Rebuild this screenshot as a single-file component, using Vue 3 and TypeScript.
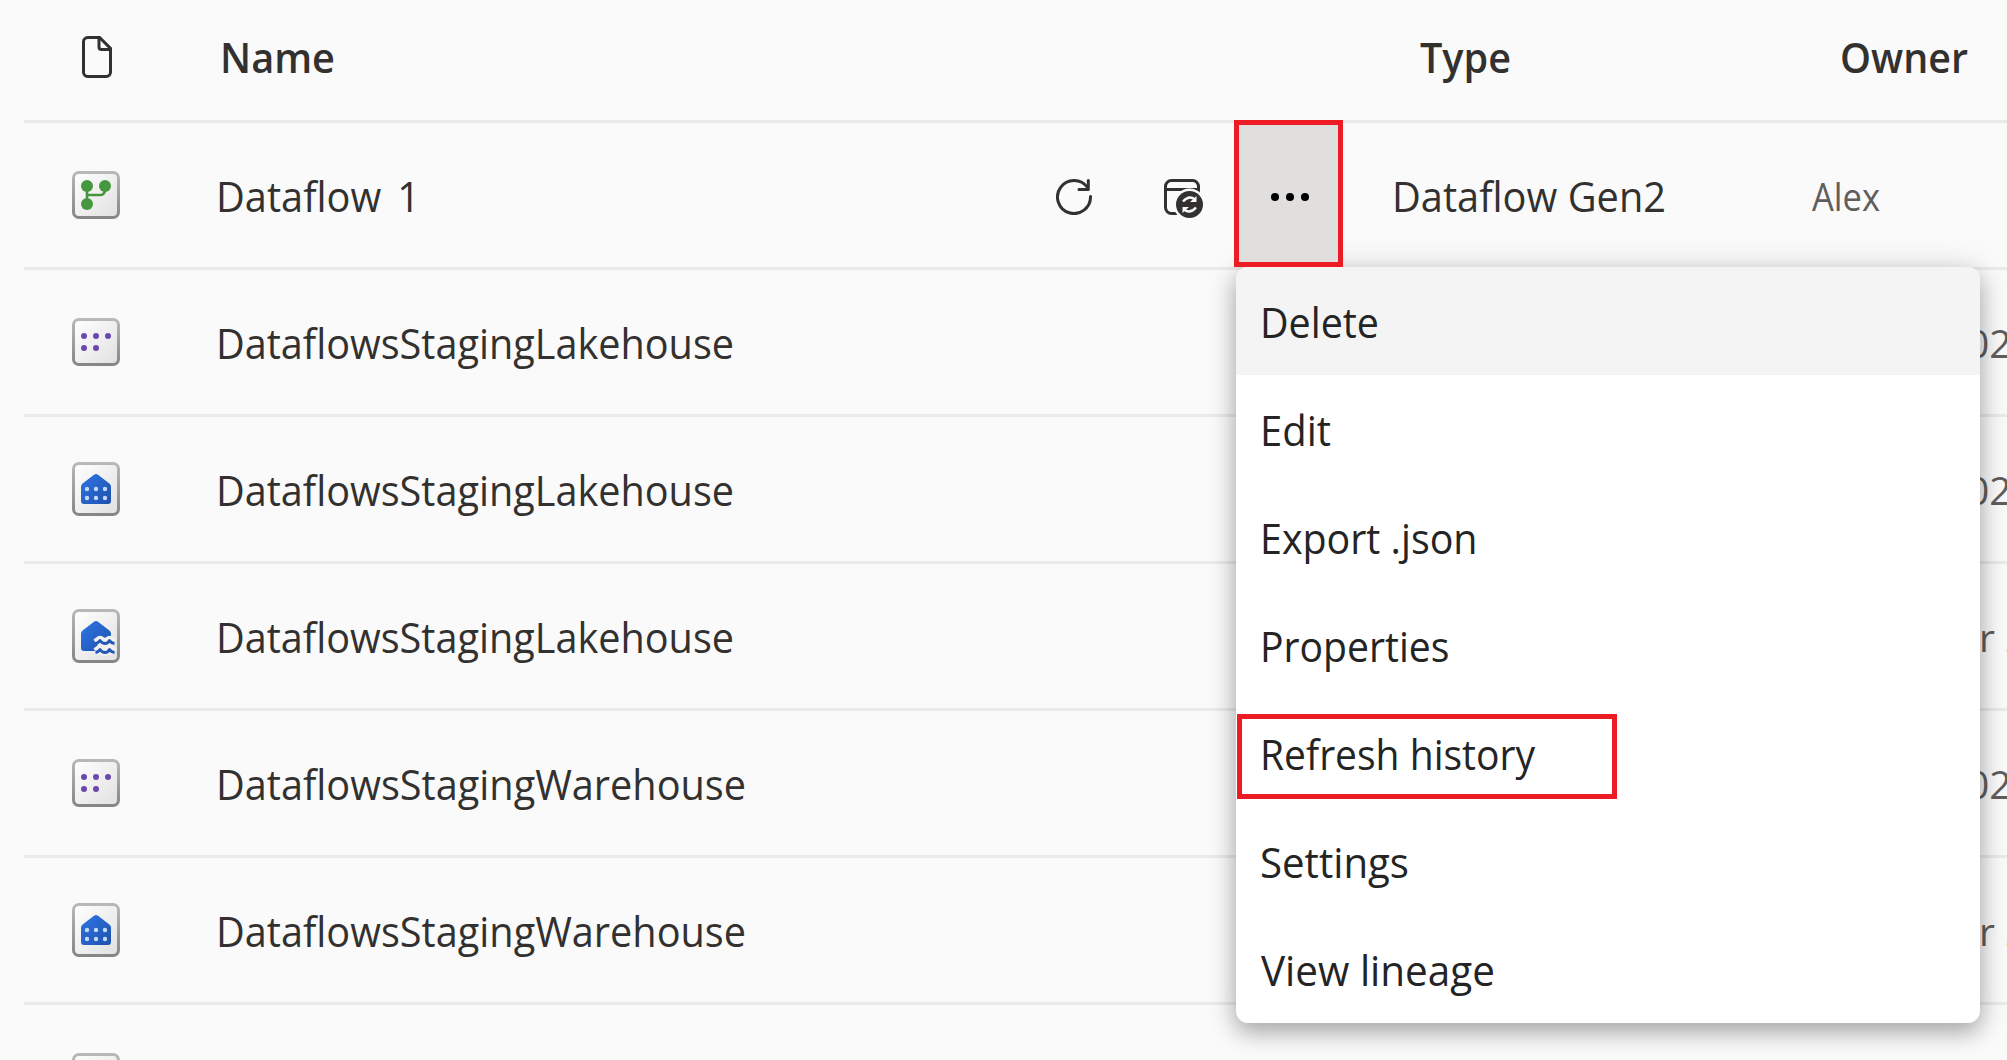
<script setup lang="ts">
type IconKind = 'dataflow' | 'dataset' | 'warehouse' | 'lakehouse'

interface Item {
  id: number
  icon: IconKind
  name: string
  nameWidth: number
  owner: string
  ownerOffset: number
  ownerWidth?: number
  type?: string
}

interface Action {
  label: string
  width: number
  offset?: number
  state?: 'hover' | 'marked'
}

const items: Item[] = [
  { id: 1, icon: 'dataflow', name: 'Dataflow\u00a0 1', nameWidth: 204, type: 'Dataflow Gen2', owner: 'Alex', ownerOffset: 0, ownerWidth: 68 },
  { id: 2, icon: 'dataset', name: 'DataflowsStagingLakehouse', nameWidth: 518, owner: '02', ownerOffset: 155 },
  { id: 3, icon: 'warehouse', name: 'DataflowsStagingLakehouse', nameWidth: 518, owner: '02', ownerOffset: 155 },
  { id: 4, icon: 'lakehouse', name: 'DataflowsStagingLakehouse', nameWidth: 518, owner: 'r 2', ownerOffset: 167 },
  { id: 5, icon: 'dataset', name: 'DataflowsStagingWarehouse', nameWidth: 530, owner: '02', ownerOffset: 155 },
  { id: 6, icon: 'warehouse', name: 'DataflowsStagingWarehouse', nameWidth: 530, owner: 'r 2', ownerOffset: 167 },
  { id: 7, icon: 'dataset', name: '', nameWidth: 0, owner: '', ownerOffset: 0 },
]

const actions: Action[] = [
  { label: 'Delete', width: 119, state: 'hover' },
  { label: 'Edit', width: 71 },
  { label: 'Export .json', width: 217.5 },
  { label: 'Properties', width: 189.5 },
  { label: 'Refresh history', width: 275, state: 'marked' },
  { label: 'Settings', width: 149, offset: 0 },
  { label: 'View lineage', width: 234, offset: 0.5 },
]

// Condenses or widens a label so that it takes exactly the given width.
const vFit = {
  mounted(el: HTMLElement, binding: { value?: number }) {
    const natural = el.getBoundingClientRect().width
    if (natural && binding.value) el.style.transform = `scaleX(${binding.value / natural})`
  },
}
</script>

<template>
  <main class="page">
    <svg class="defs" width="0" height="0" aria-hidden="true">
      <defs>
        <linearGradient id="edge" x1="0" y1="0" x2="0" y2="1">
          <stop offset="0" stop-color="#b8b8b8" />
          <stop offset="1" stop-color="#868686" />
        </linearGradient>
        <linearGradient id="face" x1="0" y1="0" x2="1" y2="1">
          <stop offset="0" stop-color="#ffffff" />
          <stop offset="1" stop-color="#e0e0e0" />
        </linearGradient>
        <linearGradient id="blue" x1="0" y1="0" x2="1" y2="1">
          <stop offset="0" stop-color="#2f75e4" />
          <stop offset="1" stop-color="#1d52ad" />
        </linearGradient>
      </defs>
    </svg>

    <header class="row head">
      <div class="kind">
        <svg width="30" height="42" viewBox="0 0 30 42" fill="none" stroke="#323130" stroke-width="3">
          <path d="M5.7 1.5H17.6L28.5 12.4V36.3a4.2 4.2 0 0 1-4.2 4.2H5.7a4.2 4.2 0 0 1-4.2-4.2V5.7a4.2 4.2 0 0 1 4.2-4.2Z" />
          <path d="M17 2v9a2.5 2.5 0 0 0 2.5 2.5H28" />
        </svg>
      </div>
      <div class="name"><span v-fit="115" class="text">Name</span></div>
      <div class="tools"></div>
      <div class="type"><span v-fit="91" class="text">Type</span></div>
      <div class="owner"><span v-fit="128" class="text">Owner</span></div>
    </header>

    <section v-for="item in items" :key="item.id" class="row">
      <div class="kind">
        <svg v-if="item.icon === 'dataflow'" width="48" height="48" viewBox="0 0 48 48">
          <rect x="1.5" y="1.5" width="45" height="45" rx="5.5" fill="url(#face)" stroke="url(#edge)" stroke-width="3" />
          <path d="M15 15v18M15 24h13.5q4.5 0 4.5-6" fill="none" stroke="#46953c" stroke-width="2.6" />
          <g fill="#46973d"><circle cx="15" cy="15" r="6" /><circle cx="33" cy="15" r="6" /><circle cx="15" cy="33" r="6" /></g>
        </svg>
        <svg v-else-if="item.icon === 'dataset'" width="48" height="48" viewBox="0 0 48 48">
          <rect x="1.5" y="1.5" width="45" height="45" rx="5.5" fill="url(#face)" stroke="url(#edge)" stroke-width="3" />
          <g fill="#6b48ae">
            <circle cx="12" cy="18" r="3" /><circle cx="24" cy="18" r="3" /><circle cx="36" cy="18" r="3" />
            <circle cx="12" cy="30" r="3" /><circle cx="24" cy="30" r="3" />
          </g>
        </svg>
        <svg v-else width="48" height="54" viewBox="0 0 48 54">
          <rect x="1.5" y="1.5" width="45" height="51" rx="5.5" fill="url(#face)" stroke="url(#edge)" stroke-width="3" />
          <path d="M9 24.6q0-2 1.6-3.2L22 12.7q2-1.4 4 0l11.4 8.7Q39 22.6 39 24.6V39a3 3 0 0 1-3 3H12a3 3 0 0 1-3-3Z" fill="url(#blue)" />
          <g v-if="item.icon === 'warehouse'" fill="#c6d8f8">
            <circle cx="15" cy="27" r="2.2" /><circle cx="24" cy="27" r="2.2" /><circle cx="33" cy="27" r="2.2" />
            <circle cx="15" cy="36" r="2.2" /><circle cx="24" cy="36" r="2.2" /><circle cx="33" cy="36" r="2.2" />
          </g>
          <g v-else fill="none" stroke-linejoin="round">
            <path d="M24 34l4-3 5 3 4.5-3 5 3M24 43l4-3 5 3 4.5-3 5 3" stroke="#f0f0f0" stroke-width="8.5" />
            <path d="M23.5 34.500q3-.5 4.500-3 2 3 5 3t4.500-3q1.500 2.500 5 3M23.500 43.500q3-.5 4.500-3 2 3 5 3t4.500-3q1.500 2.500 5 3" stroke="#2358b5" stroke-width="2.8" />
          </g>
        </svg>
      </div>
      <div class="name"><span v-fit="item.nameWidth" class="text">{{ item.name }}</span></div>
      <div class="tools">
        <template v-if="item.type">
          <svg class="refresh" width="36" height="36" viewBox="0 0 36 36" fill="none" stroke="#323130" stroke-width="3" stroke-linecap="round">
            <path d="M34.5 17.500A16.500 16.500 0 1 1 31.500 8.500" />
            <path d="M32.3 1.500v9H23" stroke-linejoin="round" />
          </svg>
          <svg class="schedule" width="40" height="40" viewBox="0 0 40 40">
            <g fill="none" stroke="#323130" stroke-width="3">
              <rect x="1.5" y="1.5" width="33" height="33" rx="6" /><path d="M2 10.5h32" />
            </g>
            <circle cx="25.5" cy="25.5" r="16" fill="#fafafa" />
            <circle cx="25.5" cy="25.5" r="13.5" fill="#323130" />
            <g fill="none" stroke="#fafafa" stroke-width="2.4">
              <path d="M19 22.500q6-7 12-2M32 28.500q-6 7-12 2" />
              <path d="M32.500 17v6H26ZM18.500 34v-6H25Z" fill="#fafafa" stroke="none" />
            </g>
          </svg>
          <button class="more" aria-label="More options"><i></i><i></i><i></i></button>
        </template>
      </div>
      <div class="type"><span v-if="item.type" v-fit="274" class="text">{{ item.type }}</span></div>
      <div class="owner">
        <span v-fit="item.ownerWidth" class="text" :style="{ marginLeft: item.ownerOffset + 'px' }">{{ item.owner }}</span>
      </div>
    </section>

    <nav class="menu">
      <a v-for="action in actions" :key="action.label" class="action" :class="action.state">
        <span v-fit="action.width" class="text" :style="{ marginLeft: (action.offset ?? 0) + 'px' }">{{ action.label }}</span>
      </a>
    </nav>
  </main>
</template>

<style>
body {
  margin: 0;
  overflow: hidden;
  background: #fafafa;
}
</style>

<style scoped>
.page {
  position: relative;
  box-sizing: border-box;
  width: 2007px;
  height: 1060px;
  padding-left: 24px;
  overflow: hidden;
  background: #fafafa;
  color: #323130;
  font: 400 42px/57px 'Open Sans', 'Noto Sans', sans-serif;
  font-variant-ligatures: none;
}
.defs {
  position: absolute;
}
.row {
  display: grid;
  grid-template-columns: 144px 866px 309px 422px 242px;
  align-items: center;
  height: 144px;
  border-bottom: 3px solid #eaeaea;
}
.kind {
  display: flex;
  justify-content: center;
}
.text {
  display: inline-block;
  white-space: pre;
  transform-origin: 0 50%;
}
.name {
  padding: 1px 0 0 48px;
  word-spacing: -2.5px;
}
.tools {
  display: flex;
  align-items: center;
  align-self: stretch;
  padding-left: 22px;
}
.schedule {
  margin: 8px 0 0 72px;
}
.refresh {
  margin-top: 4px;
}
.more {
  position: relative;
  z-index: 1;
  box-sizing: border-box;
  display: flex;
  flex: none;
  align-items: center;
  justify-content: center;
  gap: 7px;
  width: 109px;
  height: 147px;
  margin: -3px 0 0 30px;
  padding: 7px 0 0 3px;
  border: 5px solid #ed1c24;
  background: #e1dfdd;
}
.more i {
  width: 8px;
  height: 8px;
  border-radius: 50%;
  background: #000;
}
.type {
  padding: 1px 0 0 48.5px;
}
.owner {
  padding-left: 47px;
  color: #605e5c;
  font-size: 39px;
  white-space: nowrap;
}
.head {
  height: 113px;
  padding-bottom: 7px;
  font-weight: 600;
}
.head .kind {
  padding-left: 2px;
}
.head .name {
  padding: 0 0 1px 52px;
}
.head .type {
  padding: 0 0 1px 77px;
}
.head .owner {
  padding: 0 0 1px 74.5px;
  color: inherit;
  font-size: inherit;
}
.menu {
  position: absolute;
  top: 267px;
  left: 1236px;
  width: 744px;
  border-radius: 12px;
  background: #fff;
  color: #242424;
  box-shadow: 0 10px 22px rgba(0, 0, 0, 0.26), 0 2px 32px rgba(0, 0, 0, 0.14);
}
.action {
  position: relative;
  box-sizing: border-box;
  display: flex;
  align-items: center;
  height: 108px;
  padding: 1px 0 0 24px;
}
.hover {
  border-radius: 12px 12px 0 0;
  background: #f4f4f4;
}
.marked::after {
  content: '';
  position: absolute;
  top: 15px;
  left: 1px;
  box-sizing: border-box;
  width: 380px;
  height: 85px;
  border: 5px solid #ed1c24;
}
</style>
